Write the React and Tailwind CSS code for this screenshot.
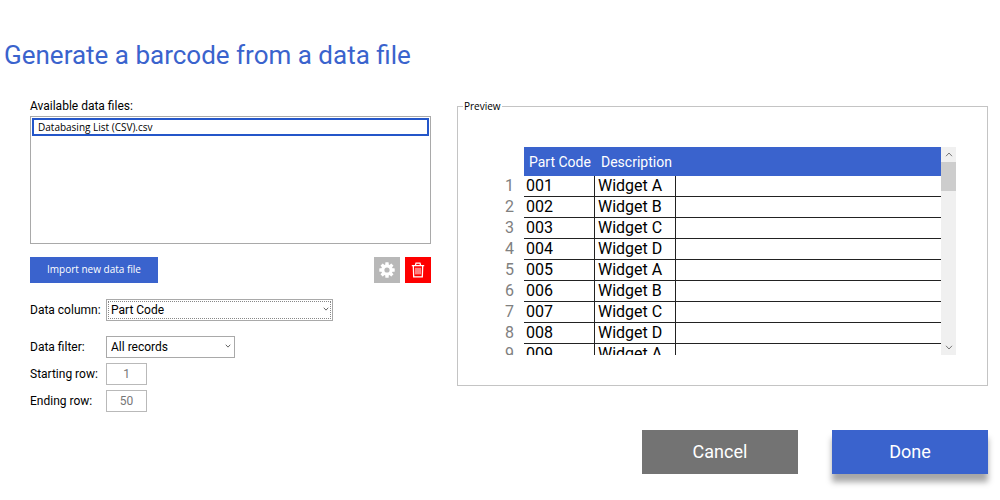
import { useState } from 'react'

const files = ['Databasing List (CSV).csv']

const columns = ['Part Code', 'Description']

const widgets = ['Widget A', 'Widget B', 'Widget C', 'Widget D']

const rows = Array.from({ length: 50 }, (_, i) => ({
  code: String(i + 1).padStart(3, '0'),
  description: widgets[i % widgets.length],
}))

const VISIBLE_ROWS = 9

function Chevron({ up = false, className }) {
  return (
    <svg viewBox="0 0 8 5" fill="none" stroke="currentColor" aria-hidden="true" className={className}>
      <path d={up ? 'M1 4.2 4 1l3 3.2' : 'M1 .8 4 4l3-3.2'} />
    </svg>
  )
}

// eight square teeth around a ring
function GearIcon() {
  return (
    <svg viewBox="0 0 16 16" fill="currentColor" aria-hidden="true" className="size-4">
      {[0, 45, 90, 135, 180, 225, 270, 315].map((a) => (
        <rect key={a} x="6.3" y="0.3" width="3.4" height="4" rx="0.5" transform={`rotate(${a} 8 8)`} />
      ))}
      <circle cx="8" cy="8" r="4.2" fill="none" stroke="currentColor" strokeWidth="3.2" />
    </svg>
  )
}

function TrashIcon() {
  return (
    <svg viewBox="0 0 14 16" fill="none" stroke="currentColor" aria-hidden="true" className="h-4 w-3.5">
      <path strokeWidth="1.3" d="M.8 3.6h12.4M4.4 3.4 5 1.2h4l.6 2.2M2.3 3.8l.4 11h8.6l.4-11" />
      <path strokeWidth="1" d="M5 5.8v6.6M7 5.8v6.6M9 5.8v6.6" />
    </svg>
  )
}

function SelectField({ id, label, value, onChange, options, focused = false, className }) {
  return (
    <div className="flex items-center">
      <label htmlFor={id} className="w-[76px] shrink-0">
        {label}
      </label>
      <div className={`relative h-[22px] ${className}`}>
        <select
          id={id}
          value={value}
          onChange={(e) => onChange(e.target.value)}
          className={`block h-full w-full appearance-none border border-[#a9a9a9] bg-white pl-1 text-black ${
            focused ? 'outline-1 -outline-offset-3 outline-dotted outline-[#888]' : ''
          }`}
        >
          {options.map((o) => (
            <option key={o}>{o}</option>
          ))}
        </select>
        <Chevron className="pointer-events-none absolute top-2 right-1 h-1 w-1.5 text-[#333]" />
      </div>
    </div>
  )
}

function RowField({ id, label, value, onChange }) {
  return (
    <div className="flex items-center">
      <label htmlFor={id} className="w-[76px] shrink-0">
        {label}
      </label>
      <input
        id={id}
        type="text"
        inputMode="numeric"
        value={value}
        onChange={(e) => onChange(e.target.value)}
        className="h-[22px] w-[41px] border border-[#b9b9b9] bg-white text-center text-[#777]"
      />
    </div>
  )
}

function FilePanel() {
  const [selected, setSelected] = useState(files[0])
  const [column, setColumn] = useState('Part Code')
  const [filter, setFilter] = useState('All records')
  const [start, setStart] = useState('1')
  const [end, setEnd] = useState('50')

  return (
    <section className="text-xs text-black">
      <h2 id="files-label" className="mb-0.5">
        Available data files:
      </h2>
      <ul aria-labelledby="files-label" className="h-32 border border-[#a9a9a9] p-px">
        {files.map((f) => (
          <li key={f}>
            <button
              type="button"
              onClick={() => setSelected(f)}
              className={`block h-[18px] w-full border-2 px-1 text-left font-['Open_Sans',sans-serif] text-[10px] leading-[14px] ${
                selected === f ? 'border-[#2456c9]' : 'border-transparent'
              }`}
            >
              {f}
            </button>
          </li>
        ))}
      </ul>

      <div className="mt-[13px] flex items-center gap-[5px]">
        <button
          type="button"
          className="mr-auto h-[26px] w-32 bg-[#3a63cd] font-['Open_Sans',sans-serif] text-[10px] font-medium text-white"
        >
          Import new data file
        </button>
        <button type="button" aria-label="Settings" className="grid size-[26px] place-items-center bg-[#b8b8b8] text-white">
          <GearIcon />
        </button>
        <button type="button" aria-label="Delete" className="grid size-[26px] place-items-center bg-[#fe0000] text-white">
          <TrashIcon />
        </button>
      </div>

      <div className="mt-4">
        <SelectField
          id="column"
          label="Data column:"
          value={column}
          onChange={setColumn}
          options={columns}
          focused
          className="w-[227px]"
        />
      </div>
      <div className="mt-[15px] space-y-[5px]">
        <SelectField
          id="filter"
          label="Data filter:"
          value={filter}
          onChange={setFilter}
          options={['All records', 'Row range']}
          className="w-[129px]"
        />
        <RowField id="start" label="Starting row:" value={start} onChange={setStart} />
        <RowField id="end" label="Ending row:" value={end} onChange={setEnd} />
      </div>
    </section>
  )
}

function Preview() {
  const [first, setFirst] = useState(0)
  const visible = rows.slice(first, first + VISIBLE_ROWS)

  function scroll(step) {
    setFirst((f) => Math.min(Math.max(f + step, 0), rows.length - VISIBLE_ROWS))
  }

  return (
    <fieldset className="border border-[#c4c4c4] pt-[33px] pr-[31px] pb-[30px]">
      <legend className="ml-[5px] px-px font-['Open_Sans',sans-serif] text-[10px] leading-4 text-black">Preview</legend>
      <div className="flex h-52">
        <div className="min-w-0 flex-1 overflow-hidden">
          <table className="w-full table-fixed border-separate border-spacing-0 text-left text-base leading-5 text-black">
            <colgroup>
              <col className="w-[66px]" />
              <col className="w-[71px]" />
              <col className="w-[81px]" />
              <col />
            </colgroup>
            <thead>
              <tr className="h-[29px] text-sm text-white">
                <td />
                <th className="bg-[#3a63cd] pl-[5px] font-normal whitespace-nowrap">{columns[0]}</th>
                <th className="bg-[#3a63cd] pl-[6px] font-normal whitespace-nowrap">{columns[1]}</th>
                <td className="bg-[#3a63cd]" />
              </tr>
            </thead>
            <tbody>
              {visible.map((r, i) => (
                <tr key={r.code}>
                  <th scope="row" className="border-b border-transparent pr-[10px] text-right font-normal text-[#808080]">
                    {first + i + 1}
                  </th>
                  <td className="border-r border-b border-[#222] pl-0.5">{r.code}</td>
                  <td className="border-r border-b border-[#222] pl-[3px]">{r.description}</td>
                  <td className="border-b border-[#222]" />
                </tr>
              ))}
            </tbody>
          </table>
        </div>
        <div className="flex w-[15px] flex-col bg-[#f0f0f0] text-[#777]">
          <button type="button" aria-label="Scroll up" onClick={() => scroll(-1)} className="grid h-[15px] place-items-center">
            <Chevron up className="h-[5px] w-2" />
          </button>
          <div className="relative flex-1">
            <div
              className="absolute inset-x-0 h-[29px] bg-[#cdcdcd]"
              style={{ top: `${(first / rows.length) * 100}%` }}
            />
          </div>
          <button type="button" aria-label="Scroll down" onClick={() => scroll(1)} className="grid h-[15px] place-items-center">
            <Chevron className="h-[5px] w-2" />
          </button>
        </div>
      </div>
    </fieldset>
  )
}

export default function App() {
  return (
    <main className="min-h-screen bg-white font-[Roboto,sans-serif]">
      <h1 className="pt-[38px] pl-1 text-[26px] leading-[34px] text-[#3a63cd]">Generate a barcode from a data file</h1>

      <div className="grid grid-cols-[401fr_531fr] gap-[26px] pt-[26px] pr-3 pl-[30px]">
        <FilePanel />
        <div>
          <Preview />
          <div className="mt-11 flex justify-end gap-[34px] text-lg text-white">
            <button type="button" className="h-11 w-[156px] bg-[#737373]">
              Cancel
            </button>
            <button type="button" className="h-11 w-[156px] bg-[#3a63cd] shadow-[0_8px_6px_rgba(0,0,0,0.35)]">
              Done
            </button>
          </div>
        </div>
      </div>
    </main>
  )
}
